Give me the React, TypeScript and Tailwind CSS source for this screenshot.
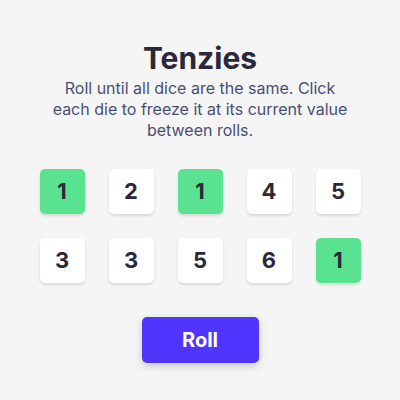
import { useState } from 'react';

const initial = [
  { value: 1, held: true },
  { value: 2, held: false },
  { value: 1, held: true },
  { value: 4, held: false },
  { value: 5, held: false },
  { value: 3, held: false },
  { value: 3, held: false },
  { value: 5, held: false },
  { value: 6, held: false },
  { value: 1, held: true },
];

export default function App() {
  const [dice, setDice] = useState(initial);

  const toggle = (i: number) => {
    setDice((d) => d.map((die, j) => (j === i ? { ...die, held: !die.held } : die)));
  };

  const roll = () => {
    setDice((d) => d.map((die) => (die.held ? die : { ...die, value: Math.ceil(Math.random() * 6) })));
  };

  return (
    <div
      className="flex h-[400px] w-[400px] flex-col items-center bg-[#f5f5f5] pt-[40px]"
      style={{ fontFamily: 'Inter, "Noto Sans", sans-serif' }}
    >
      <h1 className="text-[30px] leading-[36px] font-bold text-[#2b283a]">Tenzies</h1>
      <p className="mt-[2px] w-[300px] text-center text-[16px] leading-[21px] text-[#4a4e74]">
        Roll until all dice are the same. Click each die to freeze it at its current value between rolls.
      </p>
      <div className="mt-[28px] grid grid-cols-5 gap-[24px]">
        {dice.map((die, i) => (
          <div
            key={i}
            onClick={() => toggle(i)}
            className={`flex h-[45px] w-[45px] cursor-pointer items-center justify-center rounded-[5px] text-[22px] font-bold text-[#2b283a] shadow-[0_2px_3px_rgba(0,0,0,0.12)] ${
              die.held ? 'bg-[#59e391]' : 'bg-white'
            }`}
          >
            {die.value}
          </div>
        ))}
      </div>
      <button
        onClick={roll}
        className="mt-[34px] h-[46px] w-[117px] rounded-[5px] bg-[#5035ff] text-[20px] font-bold text-white shadow-[0_3px_8px_rgba(0,0,0,0.18)]"
      >
        Roll
      </button>
    </div>
  );
}
